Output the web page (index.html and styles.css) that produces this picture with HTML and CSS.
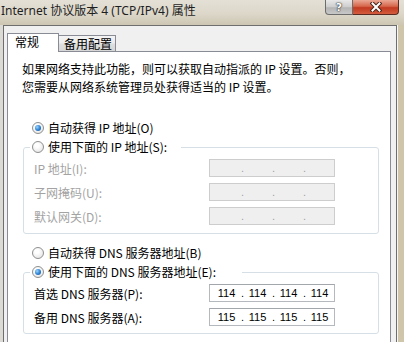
FILE: index.html
```html
<!DOCTYPE html>
<html lang="zh-CN">
<head>
    <meta charset="UTF-8">
    <title>Internet 协议版本 4 (TCP/IPv4) 属性</title>
    <link rel="stylesheet" href="styles.css">
</head>
<body>
    <div class="window">
        <div class="titlebar">
            <span class="title">Internet 协议版本 4 (TCP/IPv4) 属性</span>
            <div class="caption-btns">
                <span class="btn-help">?</span>
                <span class="btn-close">
                    <svg width="12" height="10" viewBox="0 0 12 10">
                        <path d="M2.5 1.5 L9.5 8.5 M9.5 1.5 L2.5 8.5" stroke="#4a2418" stroke-width="4" stroke-linecap="square"/>
                        <path d="M2.5 1.5 L9.5 8.5 M9.5 1.5 L2.5 8.5" stroke="#fff" stroke-width="2" stroke-linecap="square"/>
                    </svg>
                </span>
            </div>
        </div>
        <div class="dialog">
            <div class="tabs">
                <div class="tab active">常规</div>
                <div class="tab">备用配置</div>
            </div>
            <div class="panel">
                <p class="intro">如果网络支持此功能，则可以获取自动指派的 IP 设置。否则，<br>您需要从网络系统管理员处获得适当的 IP 设置。</p>

                <div class="radio-row auto-ip"><span class="radio checked"></span>自动获得 IP 地址(O)</div>
                <fieldset class="group group-ip">
                    <legend><span class="radio-row"><span class="radio"></span>使用下面的 IP 地址(S):</span></legend>
                    <div class="field-row disabled">
                        <span class="field-label">IP 地址(I):</span>
                        <div class="ipbox"><span class="seg"></span><span class="dot">.</span><span class="seg"></span><span class="dot">.</span><span class="seg"></span><span class="dot">.</span><span class="seg"></span></div>
                    </div>
                    <div class="field-row disabled">
                        <span class="field-label">子网掩码(U):</span>
                        <div class="ipbox"><span class="seg"></span><span class="dot">.</span><span class="seg"></span><span class="dot">.</span><span class="seg"></span><span class="dot">.</span><span class="seg"></span></div>
                    </div>
                    <div class="field-row disabled">
                        <span class="field-label">默认网关(D):</span>
                        <div class="ipbox"><span class="seg"></span><span class="dot">.</span><span class="seg"></span><span class="dot">.</span><span class="seg"></span><span class="dot">.</span><span class="seg"></span></div>
                    </div>
                </fieldset>

                <div class="radio-row auto-dns"><span class="radio"></span>自动获得 DNS 服务器地址(B)</div>
                <fieldset class="group group-dns">
                    <legend><span class="radio-row"><span class="radio checked"></span>使用下面的 DNS 服务器地址(E):</span></legend>
                    <div class="field-row">
                        <span class="field-label">首选 DNS 服务器(P):</span>
                        <div class="ipbox"><span class="seg">114</span><span class="dot">.</span><span class="seg">114</span><span class="dot">.</span><span class="seg">114</span><span class="dot">.</span><span class="seg">114</span></div>
                    </div>
                    <div class="field-row">
                        <span class="field-label">备用 DNS 服务器(A):</span>
                        <div class="ipbox"><span class="seg">115</span><span class="dot">.</span><span class="seg">115</span><span class="dot">.</span><span class="seg">115</span><span class="dot">.</span><span class="seg">115</span></div>
                    </div>
                </fieldset>
            </div>
        </div>
    </div>
</body>
</html>
```

FILE: styles.css
```css
:root {
    --borde-tab: #898c95;
    --fondo-dialogo: #f0f0f0;
    --borde-grupo: #d5dfe5;
}
body {
    margin: 0;
    font-family: "Noto Sans CJK SC", sans-serif;
    font-size: 12px;
    color: #000;
}
.window {
    width: 404px;
    height: 342px;
    overflow: hidden;
    background: linear-gradient(to right, #dcdad4 0px, #d9d6cd 60%, #cfc5aa 100%);
}
.titlebar {
    height: 25px;
    display: flex;
    background: linear-gradient(to bottom, #e4e0d6 0%, #dcd7c9 55%, #cdc6b2 100%);
}
.title {
    padding: 3px 0 0 1px;
    line-height: 16px;
    font-family: "Noto Sans", "Noto Sans CJK SC", sans-serif;
    font-size: 12px;
    color: #1e1e1e;
    white-space: nowrap;
}
.caption-btns {
    display: flex;
    margin-left: auto;
    margin-right: 5px;
    align-self: flex-start;
}
.btn-help,
.btn-close {
    height: 15px;
    box-sizing: border-box;
    display: flex;
    align-items: center;
    justify-content: center;
}
.btn-help {
    width: 28px;
    border: 1px solid #6c6c6c;
    border-top: none;
    border-radius: 0 0 0 4px;
    background: linear-gradient(to bottom, #e8e8e8, #cdcdcd 50%, #b4b4b4 55%, #c8c8c8);
    color: #fff;
    font-family: "DejaVu Sans", sans-serif;
    font-weight: bold;
    font-size: 11px;
    text-shadow: 0 0 1px #333, 0 0 1px #333, 0 0 2px #555;
}
.btn-close {
    width: 46px;
    border: 1px solid #5c2a20;
    border-top: none;
    border-left: none;
    border-radius: 0 0 4px 0;
    background: linear-gradient(to bottom, #eaa894, #d6664c 45%, #c13a20 55%, #d45c3e);
}
.dialog {
    margin: 0 7px 0 3px;
    height: 317px;
    border: 1px solid #6e6e6e;
    border-bottom: none;
    box-shadow: 1px 0 0 #f6f6f6;
    background: var(--fondo-dialogo);
    padding: 7px 5px 0 3px;
}
.tabs {
    display: flex;
    align-items: flex-end;
}
.tab {
    box-sizing: border-box;
    border: 1px solid var(--borde-tab);
    border-bottom: none;
    white-space: nowrap;
}
.tab.active {
    position: relative;
    z-index: 1;
    width: 52px;
    height: 19px;
    margin-bottom: -1px;
    padding-left: 7px;
    line-height: 15px;
    background: #fff;
}
.tab:not(.active) {
    width: 58px;
    height: 16px;
    margin-left: -1px;
    padding-left: 5px;
    line-height: 15px;
    background: linear-gradient(to bottom, #f4f4f4, #ececec 45%, #dedede 55%, #d6d6d6);
}
.panel {
    border: 1px solid var(--borde-tab);
    background: #fff;
    min-height: 300px;
    padding-top: 8px;
}
.intro {
    margin: 0 0 0 14px;
    line-height: 18px;
    white-space: nowrap;
}
.radio-row {
    display: flex;
    align-items: center;
    height: 16px;
    line-height: 16px;
    white-space: nowrap;
}
.radio {
    width: 12px;
    height: 12px;
    box-sizing: border-box;
    margin-right: 4px;
    border: 1px solid #8e8f8f;
    border-radius: 50%;
    background: radial-gradient(circle at 40% 35%, #ffffff 20%, #dedede 100%);
    display: flex;
    align-items: center;
    justify-content: center;
    flex-shrink: 0;
}
.radio.checked::after {
    content: "";
    width: 6px;
    height: 6px;
    border-radius: 50%;
    background: radial-gradient(circle at 35% 35%, #9ad6ff 0%, #2a7fd0 55%, #174f96 100%);
}
.auto-ip {
    margin: 24px 0 0 24px;
}
.auto-dns {
    margin: 11px 0 0 24px;
}
.group {
    width: 356px;
    box-sizing: border-box;
    margin: 3px 0 0 15px;
    padding: 0 0 8px 0;
    border: 1px solid var(--borde-grupo);
    border-radius: 3px;
}
.group legend {
    margin-left: 6px;
    padding: 0 2px;
    box-sizing: border-box;
}
.group-ip legend {
    width: 151px;
}
.group-dns {
    padding-bottom: 7px;
}
.group-dns legend {
    width: 212px;
}
.field-row {
    display: flex;
    align-items: center;
    height: 18px;
    margin-top: 6px;
    padding-left: 10px;
}
.group legend + .field-row {
    margin-top: 4px;
}
.field-label {
    width: 175px;
    white-space: nowrap;
}
.disabled .field-label {
    color: #a3a3a3;
}
.ipbox {
    width: 126px;
    height: 18px;
    box-sizing: border-box;
    border: 1px solid #b5b9bd;
    border-top-color: #a3a7ab;
    padding-left: 2px;
    display: flex;
    align-items: center;
    background: #fff;
    font-family: "Liberation Sans", sans-serif;
    font-size: 11px;
    line-height: 16px;
}
.disabled .ipbox {
    background: #efefef;
    border-color: #cdcdcd;
    color: #a0a0a0;
}
.seg {
    width: 29px;
    text-align: center;
}
.dot {
    width: 2px;
    overflow: visible;
}
```
